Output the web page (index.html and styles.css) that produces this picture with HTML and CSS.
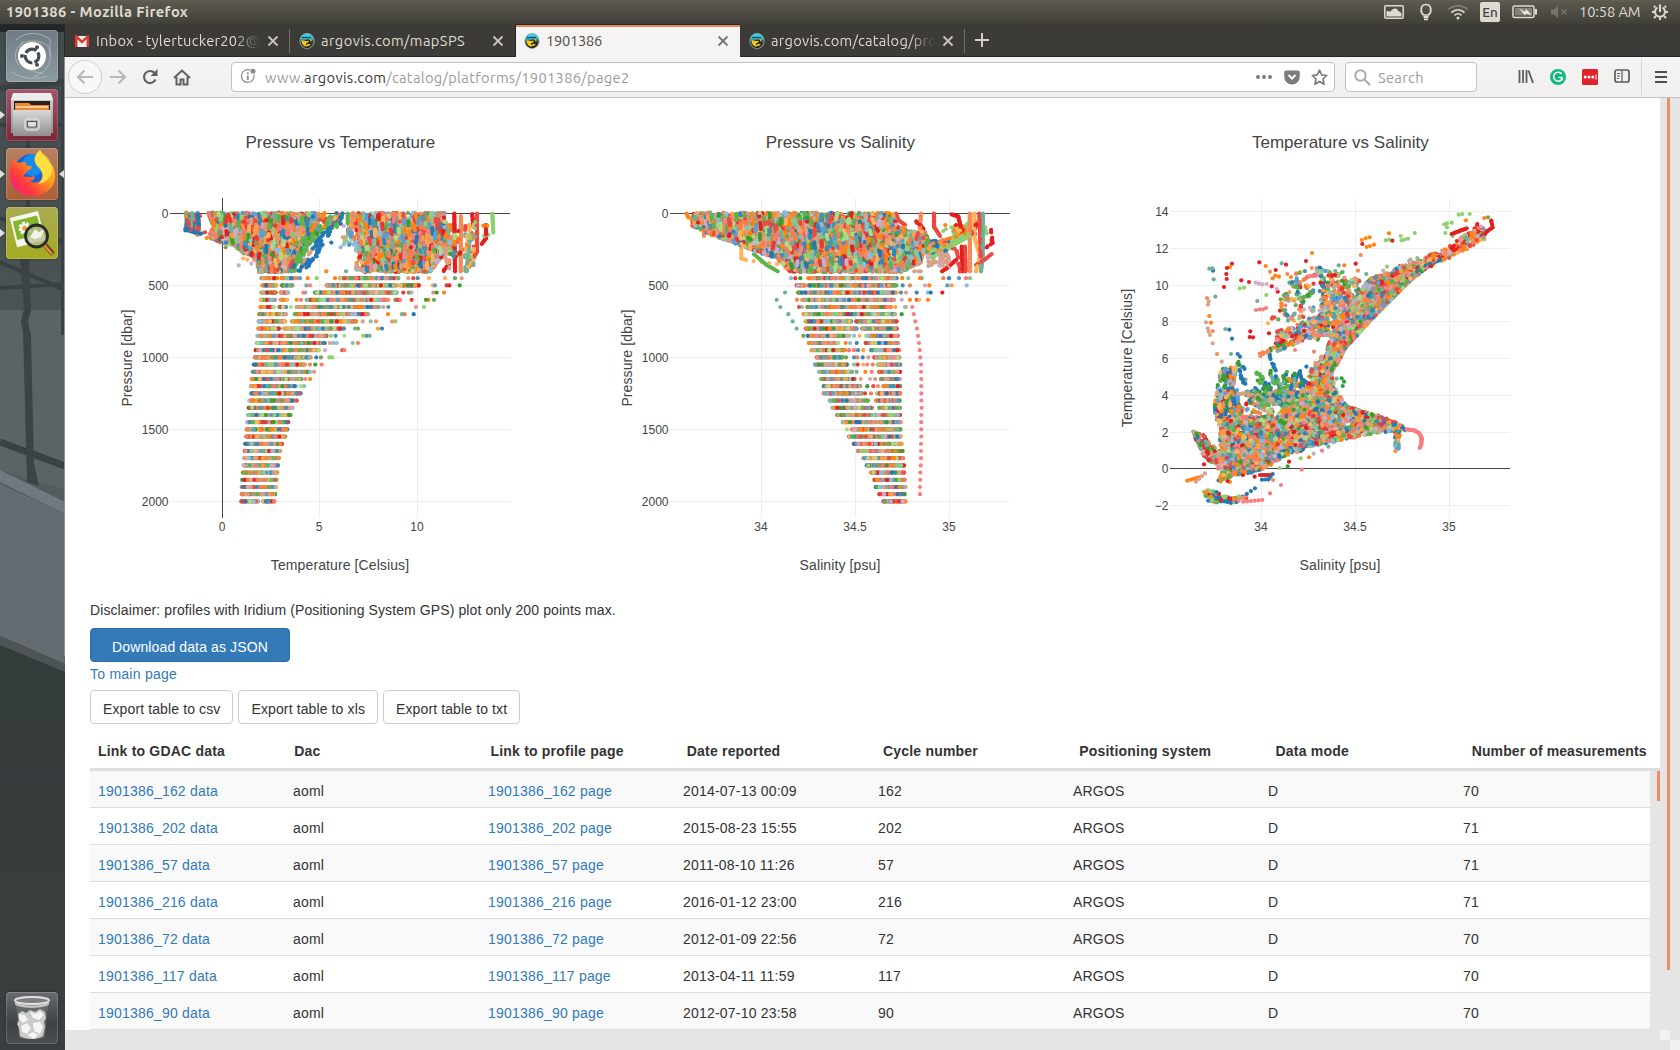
FILE: index.html
```html
<!DOCTYPE html>
<html lang="en">
<head>
<meta charset="utf-8">
<title>1901386</title>
<link rel="stylesheet" href="styles.css">
</head>
<body>
<svg width="0" height="0" class="defs">
  <defs>
    <linearGradient id="sky" x1="0" y1="0" x2="0" y2="1"><stop offset="0" stop-color="#2fe0ee"/><stop offset=".38" stop-color="#2aa9b8"/><stop offset=".5" stop-color="#38463c"/><stop offset="1" stop-color="#1c1a12"/></linearGradient>
    <symbol id="argo" viewBox="0 0 16 16">
      <ellipse cx="8" cy="8" rx="7.6" ry="7.9" fill="#8fa9a6"/><ellipse cx="8" cy="8" rx="6.7" ry="7.200" fill="url(#sky)"/>
      <path d="M3 5l1-1 1 1 1-1 1 1 1-1 1 1 2-1 1 1" stroke="#137" fill="none"/>
      <path d="M2.500 7c0 4 2 6.500 5 6.500L12 12l-3-1.500L12.500 8c0-2-2-2.500-4-1.500L6 8z" fill="#f5c81e"/><path d="M6.500 7.500l3.500-.5 1 1.500-4 3" stroke="#15150f" stroke-width="1.200" fill="none"/>
    </symbol>
    <symbol id="close" viewBox="0 0 12 12"><path d="M1.500 1.500l9 9M10.500 1.500l-9 9" stroke="currentColor" stroke-width="1.8" fill="none"/></symbol>
    <linearGradient id="steel" x1="0" y1="0" x2="0" y2="1"><stop offset="0" stop-color="#d8d8d8"/><stop offset="1" stop-color="#8f8f8f"/></linearGradient>
    <linearGradient id="fox" x1="1" y1="0" x2="0" y2="1"><stop offset="0" stop-color="#fff04a"/><stop offset=".4" stop-color="#ff9a1e"/><stop offset=".7" stop-color="#ff3b3c"/><stop offset="1" stop-color="#f2149a"/></linearGradient>
    <linearGradient id="stone" x1="0" y1="0" x2="0" y2="1"><stop offset="0" stop-color="#444b4d"/><stop offset=".3" stop-color="#4c5354"/><stop offset="1" stop-color="#727a7f"/></linearGradient>
    <linearGradient id="shade" x1="0" y1="0" x2="0" y2="1"><stop offset="0" stop-color="#343b3b"/><stop offset="1" stop-color="#3a3e3f"/></linearGradient>
    <filter id="grain"><feTurbulence type="fractalNoise" baseFrequency=".35" numOctaves="3"/><feColorMatrix values="0 0 0 0 .1  0 0 0 0 .1  0 0 0 0 .1  .9 0 0 0 -.35"/></filter>
  </defs>
</svg>

<header class="panel">
  <span class="panel-title">1901386 - Mozilla Firefox</span>
  <div class="indicators">
    <span class="ind"><svg width="20" height="14" viewBox="0 0 20 14"><rect x=".8" y=".8" width="18.400" height="12.400" rx="1" fill="none" stroke="#dfdbd2" stroke-width="1.5"/><path d="M2.500 6l4 .5c2-3 5-4 7-2 .5 2 3 2 4 4v3h-15z" fill="#dfdbd2"/></svg></span>
    <span class="ind"><svg width="16" height="18" viewBox="0 0 16 18"><path d="M5.500 12C2 9 2.200 1.500 8 1.500S14 9 10.500 12z" fill="none" stroke="#dfdbd2" stroke-width="1.700"/><path d="M5.500 14h5M6 16.400h4" stroke="#dfdbd2" stroke-width="1.800"/></svg></span>
    <span class="ind"><svg width="22" height="16" viewBox="0 0 22 16" fill="none" stroke-width="1.700"><path d="M1.500 5.500c5-5 14-5 19 0" stroke="#858279"/><path d="M4.500 8.500c4-3.500 9-3.500 13 0M7.500 11.300c2-2 5-2 7 0" stroke="#dfdbd2"/><circle cx="11" cy="14" r="1.500" fill="#dfdbd2"/></svg></span>
    <span class="ind"><b class="kbd">En</b></span>
    <span class="ind batt"><svg width="26" height="14" viewBox="0 0 26 14"><rect x="1" y="1" width="21" height="11.500" rx="1.500" fill="none" stroke="#dfdbd2" stroke-width="1.500"/><path d="M24 4v5.500" stroke="#dfdbd2" stroke-width="2"/><rect x="3" y="3" width="17" height="7.500" fill="#858279"/><path d="M7 3l6 4 1-3 6 6.500-6-2-1 2z" fill="#efece4"/></svg></span>
    <span class="ind"><svg width="20" height="14" viewBox="0 0 20 14"><path d="M1 4.500h3l4-4v13l-4-4H1z" fill="#76736b"/><path d="M11.500 4.500l5 5M16.500 4.500l-5 5" stroke="#76736b" stroke-width="1.600"/></svg></span>
    <span class="clock">10:58 AM</span>
    <span class="ind gear"><svg width="18" height="18" viewBox="-9 -9 18 18" fill="none" stroke="#dfdbd2" stroke-width="2"><path d="M-2.500-4.500A5 5 0 1 0 2.500-4.500"/><path d="M0-7.500V0"/><path d="M4.500-4.500l1.500-1.500M5.500 0H8M4.200 4.200L6 6M0 5.500V8M-4.200 4.200L-6 6M-5.500 0H-8M-4.500-4.500L-6-6"/></svg></span>
  </div>
</header>

<div class="desktop">
  <aside class="launcher">
    <svg class="wallpaper" width="65" height="1026" viewBox="0 24 65 1026">
      <rect y="24" width="65" height="1026" fill="url(#stone)"/>
      <path d="M0 24h65v8H0z" fill="#242829"/>
      <path d="M0 310h65v180L0 470z" fill="#5d6466"/>
      <g stroke="#394043" fill="none"><path d="M0 88l65-6" stroke-width="6"/><path d="M28 90v170M0 125h65M63 85v250" stroke-width="4"/><path d="M0 218l65 25M0 262l65 28M0 288l65-4" stroke-width="4"/><path d="M0 442l65 24" stroke-width="7"/></g>
      <path d="M20 258h9l2 52-3 12 3 14 3 128 5 22-12-4-4-150-2-10 3-14z" fill="#3b4246"/>
      <path d="M0 470l65 32v12L0 482z" fill="#737b81"/>
      <path d="M0 484l65 30v152L0 640z" fill="#666d72"/>
      <rect y="310" width="65" height="350" filter="url(#grain)" opacity=".5"/>
      <path d="M0 636l65 28v386H0z" fill="url(#shade)"/><path d="M0 636l65 28v8L0 645z" fill="#4e5455"/>
      <path d="M64.500 56v600" stroke="#8d9192"/><path d="M64.500 24v33" stroke="#2b2a28"/>
    </svg>
    <div class="tiles">
      <div class="tile dash"><svg width="52" height="52" viewBox="0 0 52 52"><g fill="none" stroke="#b9c2c6" stroke-width="1" opacity=".75"><path d="M13 36C2 20 18 4 39 14M17 11c-9 14 1 32 20 32M40 14c10 12 2 29-13 33M6 42c8 6 22 9 35 4M10 10C20 1 33 2 44 9v17"/></g><circle cx="26" cy="26" r="14" fill="#fff"/><g fill="none" stroke="#474d50" stroke-width="3.200"><circle cx="26" cy="26" r="6.800" stroke-dasharray="12.200 2" stroke-dashoffset="4"/></g><g fill="#474d50"><circle cx="16" cy="26" r="2"/><circle cx="31" cy="17.300" r="2"/><circle cx="31" cy="34.700" r="2"/></g></svg></div>
      <div class="tile files run"><svg width="52" height="52" viewBox="0 0 52 52"><path d="M8 4h36l3 6v34H5V10z" fill="url(#steel)"/><path d="M7 4h38l2 7H5z" fill="#ececec"/><rect x="8" y="12" width="36" height="12" fill="#27221f"/><path d="M9 14h14l2 2h18v7H9z" fill="#ec8830"/><path d="M10 18h32" stroke="#fbe0b8" stroke-width="1.500"/><rect x="7" y="21" width="38" height="26" rx="1" fill="url(#steel)"/><rect x="19" y="30" width="14" height="11" rx="2" fill="#b4b4b4" stroke="#eee"/><rect x="21.500" y="32.500" width="9" height="5.500" fill="#ddd" stroke="#555"/></svg></div>
      <div class="tile firefox run"><svg width="52" height="52" viewBox="0 0 52 52"><circle cx="26" cy="24" r="18" fill="#1762d8"/><circle cx="27" cy="17" r="11" fill="#18a6f2" opacity=".6"/><path d="M7 11c2 1 3 2 5 4 3-1 5-1 8-1-1 2 0 4 5 4 2 2-1 4-4 5 0 3-4 3-3 6 3-1 6 1 10-1 2 3-1 4-4 5 6 4 13 0 14-7 1-5-8-10-6-19l2-5c3 5 8 6 10 12 2 3 5 7 5 14 0 12-10 20-23 20C13 48 3 38 4 26c0-6 2-11 3-15z" fill="url(#fox)"/><path d="M34 2c-9 8-5 14 0 19 4 5 3 11-2 15 9-1 14-8 14-15C46 14 37 9 34 2z" fill="#ffe03c"/></svg></div>
      <div class="tile viewer run"><svg width="52" height="52" viewBox="0 0 52 52"><g transform="rotate(-14 22 22)"><rect x="7" y="7" width="29" height="30" fill="#f5f6ef"/><rect x="9" y="11" width="25" height="19" fill="#84b52b"/><g stroke="#fff" stroke-width="3"><path d="M19 14v13M13 20.500h12M14.500 16l9 9M23.500 16l-9 9"/></g><circle cx="19" cy="20.500" r="2.500" fill="#ef9b21"/></g><path d="M39 38l8 9" stroke="#7d451c" stroke-width="5"/><path d="M38 38l8 9" stroke="#dd9848" stroke-width="2"/><circle cx="30.500" cy="29" r="11" fill="#b6bd8c" opacity=".7"/><path d="M24 30l5-8 4 3 5-2-3 7-6 2z" fill="#f3f3ea"/><circle cx="30.500" cy="29" r="11" fill="none" stroke="#262b2a" stroke-width="2.800"/></svg></div>
    </div>
    <div class="tile trash"><svg width="52" height="52" viewBox="0 0 52 52"><path d="M10 10l3 35c4 3 22 3 26 0l3-35z" fill="#6f7373" opacity=".7"/><path d="M12 22l4-3 4 2 4-3 5 2 5-3 5 3 1 6-2 4 1 5-2 9c-5 4-18 4-23 0l-1-8-2-4 2-4z" fill="#c9cac9"/><path d="M13 22l6 1 3 5-5 3-4-4zM24 20l6 2 4-3 4 4-5 5-6-2zM15 34l6-3 4 5-4 6-5-2zM27 31l7-1 3 5-3 7-6-3zM21 43l6-3 5 3-4 4z" fill="#f5f5f4"/><ellipse cx="26" cy="8.500" rx="17" ry="3.600" fill="#7d807f" stroke="#dedede" stroke-width="2"/><path d="M9 9c0 6 34 6 34 0v3c-3 5-31 5-34 0z" fill="#c8c9c8"/></svg></div>
  </aside>

  <main class="browser">
    <nav class="tabs">
      <div class="tab"><svg class="fav gm" width="14" height="12" viewBox="0 0 14 12"><path d="M0 1h14v11H0z" fill="#f1eeee"/><path d="M1.200 12V1.500L7 6.800l5.800-5.300V12" fill="none" stroke="#d93a2f" stroke-width="2.500"/></svg><span class="tab-label fade">Inbox - tylertucker202@g</span><svg class="x" width="12" height="12"><use href="#close"/></svg></div>
      <div class="tab sep"><svg class="fav" width="16" height="16"><use href="#argo"/></svg><span class="tab-label">argovis.com/mapSPS</span><svg class="x" width="12" height="12"><use href="#close"/></svg></div>
      <div class="tab active"><svg class="fav" width="16" height="16"><use href="#argo"/></svg><span class="tab-label num">1901386</span><svg class="x" width="12" height="12"><use href="#close"/></svg></div>
      <div class="tab"><svg class="fav" width="16" height="16"><use href="#argo"/></svg><span class="tab-label fade">argovis.com/catalog/pro</span><svg class="x" width="12" height="12"><use href="#close"/></svg></div>
      <div class="newtab"><svg width="14" height="14" viewBox="0 0 14 14"><path d="M7 0v14M0 7h14" stroke="#d6d1c7" stroke-width="2"/></svg></div>
    </nav>

    <div class="toolbar">
      <span class="back"><svg width="18" height="16" viewBox="0 0 18 16"><path d="M17 8H2M8.500 1.500L2 8l6.500 6.500" fill="none" stroke="#b9b8b6" stroke-width="2"/></svg></span>
      <span class="tb"><svg width="18" height="16" viewBox="0 0 18 16"><path d="M1 8h15M9.500 1.500L16 8l-6.500 6.500" fill="none" stroke="#b9b8b6" stroke-width="2"/></svg></span>
      <span class="tb"><svg width="16" height="16" viewBox="0 0 16 16"><path d="M13.500 10.500A6 6 0 1 1 12.500 4" fill="none" stroke="#5f5f5e" stroke-width="2.200"/><path d="M15.500 0v7h-7z" fill="#5f5f5e"/></svg></span>
      <span class="tb"><svg width="18" height="17" viewBox="0 0 18 17"><path d="M1 9l8-7.500L17 9M3.500 8v7.500h4v-5h3v5h4V8" fill="none" stroke="#5f5f5e" stroke-width="2"/></svg></span>
      <div class="urlbar">
        <svg class="info" width="17" height="17" viewBox="0 0 17 17"><path d="M10.500 2.200A6.400 6.400 0 1 0 14 6.500" fill="none" stroke="#8a8a89" stroke-width="1.200"/><path d="M7.800 7.500V12" stroke="#8a8a89" stroke-width="1.800"/><circle cx="7.800" cy="5.300" r="1.100" fill="#8a8a89"/><circle cx="13" cy="3.200" r="2.500" fill="#8a8a89"/></svg>
        <span class="url">www.<b>argovis.com</b>/catalog/platforms/1901386/page2</span>
        <svg width="18" height="6" viewBox="0 0 18 6" fill="#7c7c7b"><circle cx="3" cy="3" r="2"/><circle cx="9" cy="3" r="2"/><circle cx="15" cy="3" r="2"/></svg>
        <svg width="16" height="15" viewBox="0 0 16 15"><path d="M2 .5h12q1.800 0 1.800 2v4.300a7.800 7.800 0 0 1-15.600 0V2.500q0-2 1.800-2z" fill="#7c7c7b"/><path d="M4.500 5L8 8.500 11.500 5" fill="none" stroke="#fff" stroke-width="2"/></svg>
        <svg width="17" height="17" viewBox="0 0 17 17"><path d="M8.500 1.200l2.200 4.700 5 .6-3.700 3.500 1 5.200-4.500-2.600L4 15.200 5 10 1.300 6.500l5-.6z" fill="none" stroke="#7c7c7b" stroke-width="1.700" stroke-linejoin="round"/></svg>
      </div>
      <div class="search"><svg width="17" height="17" viewBox="0 0 17 17"><circle cx="6.500" cy="6.500" r="5.200" fill="none" stroke="#adacaa" stroke-width="2"/><path d="M10.500 10.500l5.500 5.500" stroke="#adacaa" stroke-width="2.200"/></svg><span>Search</span></div>
      <div class="tools">
        <span><svg width="16" height="15" viewBox="0 0 16 15" stroke="#5c5c5b" stroke-width="1.800"><path d="M1.500 1v13M5 1v13M8.500 1v13M10.500 1.500l4.500 12.500"/></svg></span>
        <span><svg width="16" height="16" viewBox="0 0 16 16"><circle cx="8" cy="8" r="8" fill="#12b87c"/><path d="M11.700 5A4.500 4.500 0 1 0 12 10M8.500 8.500h3.500v3" fill="none" stroke="#fff" stroke-width="1.500"/></svg></span>
        <span><svg width="16" height="16" viewBox="0 0 16 16"><rect width="16" height="16" rx="1.500" fill="#df2429"/><g fill="#fff"><circle cx="3.200" cy="8" r="1.500"/><circle cx="7" cy="8" r="1.500"/><circle cx="10.800" cy="8" r="1.500"/><path d="M13.500 5.500h1v5h-1z"/></g></svg></span>
        <span><svg width="16" height="14" viewBox="0 0 16 14" fill="none" stroke="#5c5c5b" stroke-width="1.700"><rect x="1" y="1" width="14" height="12" rx="2"/><path d="M8 1v12M3 4.500h3M3 7h3M3 9.500h2" stroke-width="1.200"/></svg></span>
      </div>
      <div class="menu"><svg width="12" height="12" viewBox="0 0 12 12"><path d="M0 1h12M0 6h12M0 11h12" stroke="#4d4d4c" stroke-width="1.900"/></svg></div>
    </div>

    <div class="viewport">
      <section class="page">
        <div class="plots">
          <svg class="plot" id="pt" width="500" height="500"></svg>
          <svg class="plot" id="ps" width="500" height="500"></svg>
          <svg class="plot" id="ts" width="500" height="500"></svg>
        </div>
        <p class="note">Disclaimer: profiles with Iridium (Positioning System GPS) plot only 200 points max.</p>
        <a class="btn primary">Download data as JSON</a>
        <a class="link main-link">To main page</a>
        <div class="exports"><button class="btn">Export table to csv</button><button class="btn">Export table to xls</button><button class="btn">Export table to txt</button></div>
        <div class="row head"><span>Link to GDAC data</span><span>Dac</span><span>Link to profile page</span><span>Date reported</span><span>Cycle number</span><span>Positioning system</span><span>Data mode</span><span class="tight">Number of measurements</span></div>
        <div class="table-body">
          <div class="rows">
            <div class="row"><a class="link">1901386_162 data</a><span>aoml</span><a class="link">1901386_162 page</a><span>2014-07-13 00:09</span><span>162</span><span>ARGOS</span><span>D</span><span>70</span></div>
            <div class="row"><a class="link">1901386_202 data</a><span>aoml</span><a class="link">1901386_202 page</a><span>2015-08-23 15:55</span><span>202</span><span>ARGOS</span><span>D</span><span>71</span></div>
            <div class="row"><a class="link">1901386_57 data</a><span>aoml</span><a class="link">1901386_57 page</a><span>2011-08-10 11:26</span><span>57</span><span>ARGOS</span><span>D</span><span>71</span></div>
            <div class="row"><a class="link">1901386_216 data</a><span>aoml</span><a class="link">1901386_216 page</a><span>2016-01-12 23:00</span><span>216</span><span>ARGOS</span><span>D</span><span>71</span></div>
            <div class="row"><a class="link">1901386_72 data</a><span>aoml</span><a class="link">1901386_72 page</a><span>2012-01-09 22:56</span><span>72</span><span>ARGOS</span><span>D</span><span>70</span></div>
            <div class="row"><a class="link">1901386_117 data</a><span>aoml</span><a class="link">1901386_117 page</a><span>2013-04-11 11:59</span><span>117</span><span>ARGOS</span><span>D</span><span>70</span></div>
            <div class="row"><a class="link">1901386_90 data</a><span>aoml</span><a class="link">1901386_90 page</a><span>2012-07-10 23:58</span><span>90</span><span>ARGOS</span><span>D</span><span>70</span></div>
          </div>
          <div class="inner-scroll"><i></i></div>
        </div>
      </section>
      <div class="vscroll"><i></i></div>
    </div>
    <div class="hscroll"><i></i><i></i></div>
  </main>
</div>
<script src="plots.js"></script>
</body>
</html>
```

FILE: styles.css
```css
* { box-sizing: border-box; }
body { margin: 0; width: 1680px; height: 1050px; overflow: hidden; display: flex; flex-direction: column; background: #fff; font: 14px/20px "Liberation Sans", Arial, sans-serif; color: #333; }
svg { display: block; flex: none; }
.defs { position: absolute; }

.panel { height: 24px; flex: none; display: flex; align-items: center; justify-content: space-between; padding: 0 7px 2px 6px; background: linear-gradient(#5d594e, #403f3a); border-top: 1px solid #625e50; font-family: Ubuntu, "Noto Sans", sans-serif; color: #dfdbd2; }
.panel-title { font-weight: 700; font-size: 14.67px; letter-spacing: .4px; white-space: nowrap; }
.indicators { display: flex; align-items: center; height: 21px; }
.ind { width: 32px; display: flex; justify-content: center; }
.ind.batt { width: 38px; }
.kbd { width: 20px; height: 20px; border-radius: 2px; background: #dfdbd2; color: #45433d; font-weight: 500; font-size: 13.5px; text-align: center; }
.clock { width: 70px; padding-left: 3px; font-size: 14.67px; letter-spacing: -.1px; white-space: nowrap; }
.ind.gear { width: 27px; }

.desktop { flex: 1; display: flex; min-height: 0; }
.launcher { position: relative; width: 65px; flex: none; padding: 6px; display: flex; flex-direction: column; justify-content: space-between; }
.wallpaper { position: absolute; left: 0; top: 0; }
.tiles { display: flex; flex-direction: column; gap: 7px; }
.tile { position: relative; width: 52px; height: 52px; border-radius: 4px; box-shadow: inset 0 0 0 1px rgba(255,255,255,.18), 0 0 3px rgba(0,0,0,.3); }
.dash { background: linear-gradient(#6f7c83, #8d9aa0); }
.files { background: linear-gradient(#a0576a, #7d2738); }
.firefox { background: linear-gradient(#b98064, #ac5f35); }
.viewer { background: linear-gradient(#a9ac52, #a5ab20); }
.trash { background: linear-gradient(#696c6e, #3d4143 60%, #4a4e50); }
.run::before { content: ""; position: absolute; left: -6px; top: 22px; border: 4px solid transparent; border-left: 5px solid #e0e0de; border-right: 0; }
.firefox::after { content: ""; position: absolute; left: 53px; top: 22px; border: 4px solid transparent; border-right: 5px solid #e0e0de; border-left: 0; }

.browser { flex: 1; min-width: 0; display: flex; flex-direction: column; }
.tabs { height: 33px; flex: none; display: flex; background: #3c3b37; border-bottom: 1px solid #262523; font: 14.67px/20px Ubuntu, "Noto Sans", sans-serif; letter-spacing: .4px; color: #dfdbd2; }
.tab { width: 225px; height: 32px; display: flex; align-items: center; padding: 1px 11px 0 9px; position: relative; }
.tab .x { color: #c9c5bc; margin-left: auto; }
.tab.sep::before { content: ""; position: absolute; left: -1px; top: 5px; height: 24px; width: 1px; background: #73716b; }
.fav { margin-right: 6px; }
.fav.gm { margin-right: 7px; margin-left: 1px; }
.tab-label { width: 164px; overflow: hidden; white-space: nowrap; }
.tab-label.num { letter-spacing: -.25px; }
.tab-label.fade { letter-spacing: .25px; -webkit-mask-image: linear-gradient(90deg, #000 138px, transparent 164px); mask-image: linear-gradient(90deg, #000 138px, transparent 164px); }
.tab.active { height: 33px; padding-bottom: 2px; padding-left: 8px; background: #f5f4f2; color: #4b4a47; border-left: 1px solid #262523; border-top: 1px solid #262523; box-shadow: inset 0 2px #f0885e; }
.tab.active .x { color: #777674; }
.newtab { width: 34px; margin: 5px 0 0 -1px; height: 24px; border-left: 1px solid #73716b; display: flex; align-items: center; justify-content: center; padding-bottom: 2px; }

.toolbar { height: 41px; flex: none; background: linear-gradient(#f5f4f2, #f1f0ee); border-bottom: 1px solid #c3c1bd; display: flex; align-items: center; font-family: Ubuntu, "Noto Sans", sans-serif; font-size: 14.67px; }
.back { width: 34px; height: 34px; margin: 0 0 0 3px; border: 1px solid #d2d0cd; border-radius: 50%; display: flex; align-items: center; justify-content: center; background: #f9f8f7; }
.tb { width: 32px; display: flex; justify-content: center; }
.urlbar { width: 1104px; height: 30px; margin-left: 33px; background: #fff; border: 1px solid #c4c2be; border-radius: 4px; display: flex; align-items: center; padding: 0 6px 0 8px; gap: 11px; }
.info { margin-bottom: 2px; }
.url { flex: 1; color: #9b9b9a; white-space: nowrap; margin-left: -3px; letter-spacing: .32px; padding-top: 1px; }
.url b { font-weight: 400; color: #3a3a39; }
.search { width: 132px; height: 30px; margin-left: 10px; background: #fff; border: 1px solid #c4c2be; border-radius: 4px; display: flex; align-items: center; padding-left: 8px; gap: 7px; color: #9b9b9a; letter-spacing: .3px; }
.search span { padding-top: 1px; }
.tools { display: flex; margin-left: 33px; }
.tools span { width: 32px; display: flex; justify-content: center; }
.menu { height: 36px; border-left: 1px solid #d8d6d3; margin-left: 3px; padding-left: 13px; display: flex; align-items: center; }

.viewport { height: 932px; flex: none; display: flex; }
.page { width: 1595px; flex: none; background: #fff; padding-left: 25px; display: flex; flex-direction: column; align-items: flex-start; overflow: hidden; }
.plots { display: flex; height: 500px; flex: none; }
.plot text { fill: #444; font: 12px "Liberation Sans", Arial, sans-serif; }
.plot .ttl { font-size: 17px; }
.plot .lab { font-size: 14px; letter-spacing: .1px; }
.note { margin: 2px 0 8px; letter-spacing: .1px; }
.btn { display: block; height: 34px; padding: 8px 12px 4px; border: 1px solid #ccc; border-radius: 4px; background: #fff; font: 14px/20px "Liberation Sans", Arial, sans-serif; color: #333; letter-spacing: .12px; }
.btn.primary { width: 200px; text-align: center; background: #337ab7; border-color: #2e6da4; color: #fff; }
.link { color: #337ab7; }
.main-link { margin: 2px 0 6px; letter-spacing: .25px; }
.exports { display: flex; gap: 5px; }
.row { display: grid; grid-template-columns: repeat(8, 1fr); height: 37px; border-bottom: 1px solid #ddd; letter-spacing: .2px; }
.row > * { padding: 10px 0 0 8px; line-height: 20px; white-space: nowrap; }
.rows .row:nth-child(odd) { background: #f9f9f9; }
.row.head { width: 1570px; height: 47px; font-weight: 700; border-bottom: 3px solid #ddd; flex: none; }
.row.head > * { padding-top: 17px; }
.row.head .tight { letter-spacing: .1px; }
.table-body { display: flex; width: 1570px; height: 259px; flex: none; }
.rows { width: 1560px; }
.inner-scroll { width: 10px; background: #e5e5e5; padding-left: 7px; }
.inner-scroll i { display: block; width: 3px; height: 30px; background: #ef8d66; }
.vscroll { width: 20px; background: #e5e5e5; padding-left: 7px; }
.vscroll i { display: block; width: 3px; height: 872px; background: #ef8d66; }
.hscroll { flex: 1; background: #e5e5e5; display: flex; justify-content: flex-end; }
.hscroll i { width: 10px; height: 10px; background: #f2f1f0; }
.hscroll i + i { margin-top: 10px; }
```

FILE: plots.js
```js
// Scatter plots of the float's profiles. Dots are laid out in a fine grid of
// one third of a pixel, relative to each figure's origin.
let seed = 1901386;
const rnd = () => { seed = (seed * 1664525 + 1013904223) >>> 0; return seed / 4294967296; };
const PAL = ['#2378b5','#3585ba','#5a9fcf','#8cbcdc','#6fb09a','#88c19a','#5cb34c','#36a02f','#7a9f56','#8fd072','#a8dd88',
  '#e31f20','#ea3a35','#ee4b43','#f58484','#f7796f','#f0824f','#f0824f','#e9966e','#ff8414','#ff8414','#fb9f45','#fdb25c','#dba085','#cdaccb','#4a93ab'];
const R = '#e31f20', R2 = '#ec4840', B = '#2378b5', LB = '#5a9fcf', G = '#36a02f', G2 = '#5cb34c', LG = '#8fd072', O = '#ff8414', O2 = '#f58a55', Y = '#fdb25c', T = '#6fb09a', P = '#f77f7f', V = '#cdaccb', S = '#dba085';
const pick = () => PAL[Math.floor(rnd() * PAL.length)];

function figure(id, title, xl, yl, ox, xt, yt, zeroX, zeroY, make) {
  let grid = '';
  const dots = [];
  for (const [v, x] of xt) {
    grid += `<path d="M${x} 100V420" stroke="${v === zeroX ? '#444' : '#eee'}"/>`;
    grid += `<text x="${x - .5}" y="433" text-anchor="middle">${v}</text>`;
  }
  for (const [v, y] of yt) {
    grid += `<path d="M80 ${y}H420" stroke="${v === zeroY ? '#444' : '#eee'}"/>`;
    grid += `<text x="78.5" y="${y + 4}" text-anchor="end">${v}</text>`;
  }
  if (zeroX !== null) grid += `<path d="M${xt[0][1]} 100V420" stroke="#444"/>`;
  const dot = (x, y, c, z = rnd()) => dots.push([z, `<circle cx="${(x / 3 + ox).toFixed(1)}" cy="${(y / 3 + 12).toFixed(1)}" r="2.1" fill="${c || pick()}"/>`]);
  // a trace through the given points; "loose" scatters it into separate clumps
  const line = (pts, c, step = 4, loose = 0) => {
    let on = true;
    for (let i = 1; i < pts.length; i++) {
      const [a, b] = pts[i - 1], [x, y] = pts[i], n = Math.max(1, Math.round(Math.hypot(x - a, y - b) / step));
      for (let k = 0; k <= n; k++) {
        if (loose && rnd() < .25) on = !on;
        if (!loose || on) dot(a + (x - a) * k / n + (rnd() - .5) * loose, b + (y - b) * k / n + (rnd() - .5) * loose, c);
      }
    }
  };
  const inside = (p, x, y) => {
    let r = false;
    for (let i = 0, j = p.length - 1; i < p.length; j = i++)
      if (p[i][1] > y !== p[j][1] > y && x < (p[j][0] - p[i][0]) * (y - p[i][1]) / (p[j][1] - p[i][1]) + p[i][0]) r = !r;
    return r;
  };
  const fill = (p, n, len = 1, dx = 0, dy = 0, pal) => {
    const xs = p.map(q => q[0]), ys = p.map(q => q[1]);
    const x0 = Math.min(...xs), x1 = Math.max(...xs), y0 = Math.min(...ys), y1 = Math.max(...ys);
    for (let i = 0; i < n;) {
      let x = x0 + rnd() * (x1 - x0), y = y0 + rnd() * (y1 - y0);
      if (!inside(p, x, y)) continue;
      i++;
      const c = pal ? pal[Math.floor(rnd() * pal.length)] : pick(), m = 1 + Math.floor(rnd() * len), s = rnd() - .4, z = rnd();
      for (let k = 0; k < m; k++) { if (inside(p, x, y)) dot(x, y, c, z); x += dx * s * 2; y += dy; }
    }
  };
  // levels below 400 dbar: [from, to] is a dense run, a single number is one dot
  const levels = (rows) => rows.forEach((row, i) => {
    const y = 504.500 + i * 21.6;
    row.forEach(e => {
      if (!Array.isArray(e)) return dot(e, y);
      const n = Math.max(2, Math.round((e[1] - e[0]) / 2.1));
      dot(e[0], y); dot(e[1], y);
      for (let k = 0; k < n; k++) dot(e[0] + (k + rnd() * 1.5) / (n + .5) * (e[1] - e[0]), y);
    });
  });
  make({ dot, line, fill, levels });
  dots.sort((a, b) => a[0] - b[0]);
  document.getElementById(id).innerHTML = `${grid}${dots.map(d => d[1]).join('')}
    <text class="ttl" x="250.3" y="50" text-anchor="middle">${title}</text>
    <text class="lab" x="250" y="472" text-anchor="middle">${xl}</text>
    <text class="lab" transform="translate(${yl[1]} 260) rotate(-90)" text-anchor="middle">${yl[0]}</text>`;
}

const pressure = [[0, 115.5], [500, 187.5], [1000, 259.5], [1500, 331.5], [2000, 403.5]];
const salinity = x => [[34, x], ['34.5', x + 94], [35, x + 188]];

figure('pt', 'Pressure vs Temperature', 'Temperature [Celsius]', ['Pressure [dbar]', 42], 10,
  [[0, 132.5], [5, 229.5], [10, 327.5]], pressure, 0, 0, ({ dot, line, fill, levels }) => {
    fill([[256, 308], [300, 308], [300, 362], [256, 362]], 45, 4, 1, 6, [B, B, LB, R2, O, T, R2]);
    line([[260, 311], [260, 360], [300, 372]], B); line([[295, 311], [294, 362]], R2);
    [[315, 367, R2], [292, 375, O2], [305, 370, B], [320, 384, O], [333, 385, O], [377, 412, '#7a9f56'], [390, 402, '#7a9f56'], [416, 466, V], [454, 461, V], [430, 445, Y], [442, 449, Y], [462, 450, S], [430, 430, O2]].forEach(a => dot(...a));
    fill([[324, 308], [648, 308], [620, 345], [600, 390], [560, 440], [548, 486], [476, 486], [470, 445], [425, 425], [400, 405], [360, 397], [325, 380], [340, 350]], 2100, 4, 2, 6);
    line([[368, 311], [368, 340]], LG); line([[343, 311], [343, 355]], O);
    fill([[620, 308], [730, 308], [712, 350], [650, 375], [610, 430], [570, 486], [545, 486], [590, 400], [600, 350]], 100, 5, -4, 6, [B, LB, G2, O, G, T, G2, R2, Y]);
    for (const [x, c] of [[725, B], [708, B], [690, G2], [672, G2], [655, O2]])
      line([[x, 311], [x - 5, 340], [x - 62, 395], [x - 78, 435], [x - 112, 484]], c, 5, 6);
    line([[600, 400], [575, 450], [555, 484]], O2, 4, 3); line([[620, 400], [605, 440], [575, 484]], G2, 4, 3); line([[635, 420], [590, 484]], S, 4, 3);
    line([[712, 383], [690, 400], [660, 410], [650, 440], [612, 478]], B, 5, 3); line([[668, 405], [640, 410], [625, 450], [605, 484]], B, 5, 3); line([[722, 412], [740, 395], [770, 408]], '#8cbcdc', 10);
    line([[743, 311], [743, 340]], G2); line([[757, 311], [757, 345], [750, 370]], O2);
    fill([[755, 308], [1035, 308], [1045, 400], [1020, 450], [990, 486], [780, 486], [800, 440], [780, 400], [765, 340]], 1900, 4, 2, 6);
    fill([[720, 340], [790, 340], [805, 484], [745, 484], [775, 430], [730, 390]], 60, 3, 2, 6);
    line([[1032, 311], [1030, 370], [1042, 384]], R); line([[1063, 311], [1065, 484]], R); line([[1083, 318], [1082, 484]], O2);
    line([[1116, 311], [1120, 350], [1118, 400], [1065, 440], [1030, 484]], R, 5, 3); line([[1110, 375], [1105, 430], [1100, 484]], T);
    fill([[1095, 345], [1130, 330], [1128, 460], [1095, 486]], 30, 4, 1, 6, [Y, LG, T, R2, O]);
    line([[1118, 420], [1120, 450], [1098, 480]], Y); fill([[1040, 340], [1085, 340], [1080, 430], [1045, 460]], 30, 3, 1, 6);
    line([[1131, 311], [1131, 425], [1117, 450]], R2); line([[1158, 345], [1158, 385], [1145, 402]], R); line([[1177, 311], [1180, 368]], LG); line([[1165, 374], [1152, 378]], LG, 7);
    dot(1162, 347, O, 2); dot(1150, 347, O, 2);
    line([[1045, 410], [1035, 440], [1048, 475]], S);
    [[679, 484, O], [738, 484, T], [1048, 345, O], [1045, 415, LG]].forEach(a => dot(...a));
    levels([
      [[484, 532], [545, 590], 600, 623, 650, 705, [720, 895], 925, 940, 953, 987, 1035, 1065, 1085],
      [[486, 530], [545, 577], 619, 630, [680, 890], [900, 958], 998, 1005, 1040, 1048, 1079],
      [[484, 527], [542, 565], 610, 616, [645, 890], 910, 926, 935, 1000, 1010, 1032],
      [[482, 525], [542, 562], 590, 603, [620, 865], [886, 900], 935, 978, 985, 1002],
      [[480, 522], [538, 558], 573, [590, 838], 850, 865, 948, 972],
      [[477, 522], [530, 558], [585, 805], 864, 906, 914, 941],
      [[476, 555], [576, 768], 788, 812, 828, 876, 886],
      [[475, 540], [553, 732], 765, 774, 834, 846],
      [[472, 680], 693, 707, 733, 790, 800, 809], [[470, 675], 690, 700, 710, 758, 774], [[467, 657], 675, 727, 733],
      [[465, 632], 649, 663, 688, 697], [[461, 615], 630, 646, 665], [[458, 630], 642], [[455, 605], 616, 630], [[453, 588], 603, 612],
      [[452, 602]], [[448, 590]], [[446, 577]], [[444, 572]], [[442, 565]], [[440, 562]], [[438, 555]], [[436, 547]], [[434, 541]], [[432, 537]], [[431, 534]], [[429, 532]], [[427, 530]], [[425, 529]], [[425, 525]], [[423, 474], [489, 523]]]);
  });

figure('ps', 'Pressure vs Salinity', 'Salinity [psu]', ['Pressure [dbar]', 42], 10,
  salinity(171.5), pressure, null, 0, ({ dot, line, fill, levels }) => {
    line([[260, 311], [265, 322]], O);
    fill([[272, 308], [880, 308], [890, 345], [930, 360], [975, 365], [985, 385], [985, 420], [960, 460], [905, 486], [572, 486], [530, 445], [470, 425], [405, 400], [335, 375], [275, 347]], 3800, 4, 2, 6);
    line([[424, 330], [424, 445], [438, 450]], Y, 7); line([[462, 433], [500, 465], [533, 484]], G2, 6); line([[461, 453], [531, 462], [558, 475]], Y, 24);
    line([[380, 311], [380, 335]], '#8cbcdc'); line([[312, 345], [312, 378]], O2);
    line([[963, 311], [960, 355]], O2); line([[1002, 311], [1002, 350], [1020, 378]], R2); line([[937, 325], [990, 372]], R, 5, 3); line([[888, 311], [895, 330], [915, 345]], R2);
    line([[1110, 378], [1060, 405], [1000, 440]], LG); line([[1107, 370], [1050, 400], [990, 425]], LG); line([[1095, 372], [1000, 400]], O, 7); line([[1045, 394], [1000, 410]], B, 7);
    fill([[985, 395], [1050, 385], [1045, 420], [985, 450]], 30, 3, 4, -2, [O, B, LG, V, O2]); fill([[980, 440], [1045, 430], [1048, 468], [985, 470]], 22, 3, 4, -2, [V, S, S]);
    fill([[1060, 345], [1130, 330], [1130, 375], [1060, 385]], 35, 3, 2, 5, [O, Y, LG, R, R2]);
    line([[1020, 430], [1045, 440], [1048, 470]], S); line([[1035, 400], [1070, 420], [1080, 484]], R2, 4, 3); line([[1085, 410], [1088, 484]], R); line([[1095, 410], [1097, 484]], R2);
    line([[1055, 313], [1075, 320], [1082, 350]], R); line([[1068, 345], [1088, 360]], R); line([[1068, 450], [1040, 475], [1026, 484]], R);
    line([[1123, 311], [1123, 380], [1140, 440], [1128, 484]], Y); line([[1138, 311], [1142, 440]], R2); line([[1109, 311], [1110, 484]], O2);
    line([[1149, 311], [1148, 440], [1143, 484]], T); line([[1155, 352], [1160, 370]], LG, 9); line([[1173, 360], [1177, 400], [1160, 412]], R, 4, 3); line([[1175, 432], [1155, 448], [1128, 465]], R2, 6);
    [[1036, 345, O], [1038, 357, LG], [1030, 363, LG], [1055, 352, LG], [1155, 352, O], [985, 468, S], [955, 484, S], [962, 484, S], [943, 484, S], [1060, 365, T]].forEach(a => dot(...a));
    levels([
      [573, 586, 601, [625, 890], 907, 925, 960, 965, 1030, 1047, 1077, 1098, 1110],
      [[590, 615], [625, 890], 908, 930, 975, 988, 1042, 1055, 1100],
      [[594, 620], [628, 890], 903, 918, 950, 983, 992, 1027], [591, [606, 882], 905, 930, 950, 958, 984],
      [597, 606, [622, 873], 886, 915, 917], [[611, 885], 905], [[617, 754], [768, 890]], [[617, 770], [786, 890]],
      [610, [623, 748], 762, 779, [798, 893]], [[626, 715], 737, 750, 770, [797, 895]], [[635, 735], 747, 762, 774, 790, [813, 898]],
      [[650, 728], 738, 762, 772, 788, 805, [822, 898]], [[645, 742], 762, 773, 790, 802, 818, [833, 900]], [[656, 757], 770, 796, 815, [838, 900]],
      [[662, 765], 782, 810, 826, [843, 900]], [[671, 780], 802, 820, 834, [850, 900]], [[671, 785], 795, 813, [832, 900]],
      [[690, 805], [828, 900]], [[697, 816], [838, 900]], [[711, 835], [845, 900]], [[729, 830], [840, 902]], [741, [756, 902]],
      [[747, 902]], [[761, 905]], [[774, 908]], [[790, 910]], [[800, 912]], [[812, 913]], [[822, 914]], [[827, 917]], [[838, 915]], [[850, 917]]]);
    [555, 530, 541, 565, 578, 590].forEach((x, i) => dot(x, 547.700 + i * 21.6, T));
    [937, 941, 946, 951, 954, 957, 959, 961, 963, 963, 964, 964, 964, 964, 965, 964, 964, 964, 964, 963, 963, 963, 962, 961, 961, 960, 960].slice(0, 27).forEach((x, i) => dot(x, 590.900 + i * 21.6, P));
  });

figure('ts', 'Temperature vs Salinity', 'Salinity [psu]', ['Temperature [Celsius]', 42], 0,
  salinity(171.5), [['−2', 407.5], [0, 370.5], [2, 334.5], [4, 297.5], [6, 260.5], [8, 223.5], [10, 187.5], [12, 150.5], [14, 113.5]], null, 0, ({ dot, line, fill }) => {
    const warm = [O, O2, Y, S, R2, O];
    fill([[610, 490], [690, 470], [770, 490], [760, 600], [700, 620], [560, 640], [565, 590]], 115, 3, 4, 2);
    fill([[700, 520], [790, 500], [830, 510], [790, 600], [700, 690], [660, 690], [690, 600]], 190, 3, 4, -2);
    fill([[560, 670], [700, 610], [720, 660], [560, 725]], 110, 4, 7, -3);
    for (const [a, b, c, d, e] of [[508, 735, 720, 650, O2], [545, 715, 740, 640, O], [560, 668, 650, 615, R2], [590, 690, 720, 640, G2], [540, 722, 600, 690, G], [620, 690, 730, 670, P], [645, 650, 740, 620, LB], [560, 700, 700, 640, R], [690, 605, 760, 595, V], [520, 634, 560, 622, R2]])
      line([[a, b], [(a + c) / 2, (b + d) / 2 - 4], [c, d]], e, 5, 7);
    line([[652, 500], [680, 496]], P, 5); line([[680, 483], [710, 483]], '#8cbcdc', 8); line([[620, 505], [622, 530]], LB, 5); line([[725, 497], [745, 493]], R, 5); line([[620, 565], [660, 558]], G2, 6, 4);
    fill([[435, 745], [455, 745], [480, 830], [560, 760], [570, 790], [600, 780], [650, 760], [660, 840], [600, 870], [470, 880]], 70, 3, 5, 5, [G, G2, B, B, T, G2]);
    line([[538, 735], [550, 765], [555, 780]], B, 5, 4); line([[500, 790], [515, 800], [510, 850]], G2, 4, 8); line([[447, 765], [455, 810], [478, 835]], B, 5, 4);
    fill([[460, 840], [640, 830], [650, 880], [600, 890], [480, 880]], 130, 3, 5, 1, [G, G2, T, S, O2, B]);
    fill([[440, 880], [600, 880], [600, 940], [440, 940]], 65, 2, 5, 3);
    line([[445, 849], [600, 870]], S, 5, 5); fill([[590, 790], [640, 790], [640, 830], [590, 830]], 16, 3, 4, 4, [B, B, B, G, O]);
    fill([[395, 775], [440, 770], [448, 900], [430, 945], [385, 945], [372, 900], [382, 830]], 200, 3, 2, 6, [B, LB, B, S, O2, R, O, G, '#8cbcdc', Y]);
    fill([[415, 920], [560, 920], [620, 860], [645, 830], [690, 800], [725, 820], [750, 860], [770, 890], [840, 910], [935, 945], [935, 960], [880, 968], [820, 975], [760, 992], [690, 1003], [620, 1028], [560, 1052], [500, 1087], [430, 1092], [380, 1075], [390, 1000], [390, 940]], 3000, 2, 4, -2);
    fill([[690, 740], [750, 740], [725, 790], [740, 850], [680, 860], [650, 840], [660, 780]], 320, 2, 2, 6);
    fill([[720, 690], [745, 630], [790, 570], [840, 505], [900, 485], [940, 465], [1000, 450], [1020, 465], [960, 510], [905, 565], [850, 620], [800, 675], [765, 710], [740, 765], [695, 765]], 1350, 2, 3, -4);
    line([[1020, 465], [960, 512], [905, 567], [850, 622], [800, 677], [765, 715], [740, 765]], null, 5);
    fill([[1000, 445], [1070, 415], [1140, 365], [1160, 345], [1185, 350], [1188, 385], [1130, 420], [1020, 470]], 170, 2, 4, -3, [...warm, R, T, V, R]);
    line([[1065, 445], [1000, 468]], B, 5); line([[1085, 372], [1130, 355]], R); line([[1090, 425], [1125, 405]], R); line([[1205, 330], [1207, 353], [1175, 378]], R, 5, 4);
    fill([[955, 450], [1010, 440], [1030, 450], [960, 480]], 18, 2, 4, -3, [V, S, '#88c19a']);
    line([[735, 830], [765, 885], [830, 915], [935, 945]], null, 5, 5); line([[755, 885], [850, 915], [920, 940]], R2, 7, 5);
    fill([[305, 960], [335, 970], [385, 1020], [385, 1070], [345, 1045], [325, 1005]], 115, 2, 4, 6, [R, R2, O2, B, G, T, S, S]);
    fill([[376, 1050], [420, 1030], [500, 1070], [480, 1095], [400, 1095]], 90, 2, 4, 1);
    fill([[385, 1085], [425, 1085], [420, 1120], [385, 1120]], 18, 1, 0, 0, [O, O, B, G2, R]);
    fill([[335, 1140], [370, 1140], [400, 1158], [480, 1155], [450, 1180], [360, 1177]], 60, 2, 4, 1, [B, B, G2, O2, R, O, P, LG]);
    line([[355, 1172], [440, 1176]], B, 10); line([[460, 1175], [517, 1170]], P, 12); line([[458, 1160], [495, 1135]], B, 17);
    line([[516, 1109], [535, 1108], [548, 1092]], B, 10); line([[510, 1095], [542, 1095]], R, 7);
    line([[292, 1112], [326, 1102]], O, 8); line([[318, 1115], [345, 1090]], S, 12);
    line([[918, 950], [917, 1022]], O, 5, 4); line([[926, 950], [926, 1015]], LB, 5, 4); fill([[914, 955], [931, 955], [927, 1015], [914, 1022]], 32, 2, 1, 3);
    line([[935, 950], [945, 960]], B);
    line([[950, 958], [972, 961], [988, 970], [995, 985], [994, 1002], [989, 1014]], P, 3);
    [[351, 564, O2], [356, 574, S], [354, 584, S], [358, 618, O], [363, 638, O], [348, 637, S], [353, 655, S], [356, 665, S], [360, 675, S], [368, 663, O2], [368, 700, S], [381, 732, O2], [395, 755, S], [423, 732, T],
     [406, 657, T], [418, 659, B], [426, 686, B], [481, 664, R], [479, 681, R], [489, 682, R], [376, 560, T], [371, 508, T], [358, 476, T], [367, 475, T], [369, 482, B], [411, 474, R], [420, 471, O], [426, 461, R], [409, 492, R], [410, 507, R], [402, 531, R],
     [454, 511, R], [477, 516, R], [449, 535, LG], [462, 533, LG], [497, 518, V], [507, 521, V], [517, 523, V], [530, 522, V], [508, 457, R], [527, 468, O], [575, 460, T], [588, 464, R], [557, 480, R], [540, 485, O2], [592, 492, O2], [603, 501, O], [548, 505, O], [556, 497, O], [567, 500, O], [545, 529, R], [563, 545, R], [560, 537, V],
     [529, 555, LG], [502, 573, T], [498, 600, P], [509, 598, P], [519, 598, P], [528, 594, P], [648, 453, R], [666, 429, O], [665, 474, O2], [681, 482, T], [692, 483, LB], [706, 483, LB], [746, 466, T], [763, 466, O], [736, 483, T], [797, 461, R], [812, 435, O2], [758, 486, T], [804, 482, O2], [829, 492, T],
     [572, 568, '#7a9f56'], [582, 556, '#7a9f56'], [588, 557, R], [574, 580, O], [574, 590, O], [586, 586, P], [570, 602, R], [586, 600, LB], [534, 640, Y], [537, 670, R], [615, 720, P], [672, 725, P],
     [815, 390, O], [827, 385, O], [839, 382, O], [817, 402, R], [830, 411, O], [840, 408, O], [852, 404, O], [897, 370, O], [887, 391, LG], [897, 389, LG], [907, 392, R], [932, 378, LG], [935, 391, LG], [943, 389, LG], [954, 386, LG], [974, 369, LG],
     [1106, 314, LG], [1117, 312, LG], [1139, 312, LG], [1128, 331, O], [1063, 343, LG], [1071, 340, LG], [1085, 338, LG], [1071, 352, LG], [1066, 369, LG], [1088, 378, LG], [1101, 393, R], [1162, 342, R], [1183, 324, O], [1194, 322, G2], [1122, 377, LG], [1131, 387, LG], [1145, 372, T], [1180, 382, T], [1022, 432, LG], [1010, 447, R], [982, 444, '#88c19a'], [930, 468, R], [891, 470, LG], [880, 482, V],
     [755, 805, G], [762, 815, G], [758, 828, G], [740, 806, T], [443, 732, B], [450, 740, B], [635, 1079, P], [657, 1042, O], [671, 1031, V], [632, 1045, LG], [597, 1055, R], [593, 1069, G], [569, 1074, LG], [543, 1065, O], [573, 1125, P], [540, 1150, P], [549, 1110, O2], [696, 1022, P], [715, 1010, T], [494, 1100, R], [459, 1095, R], [342, 1063, R], [411, 1101, G2]
    ].forEach(a => dot(...a));
  });
```
